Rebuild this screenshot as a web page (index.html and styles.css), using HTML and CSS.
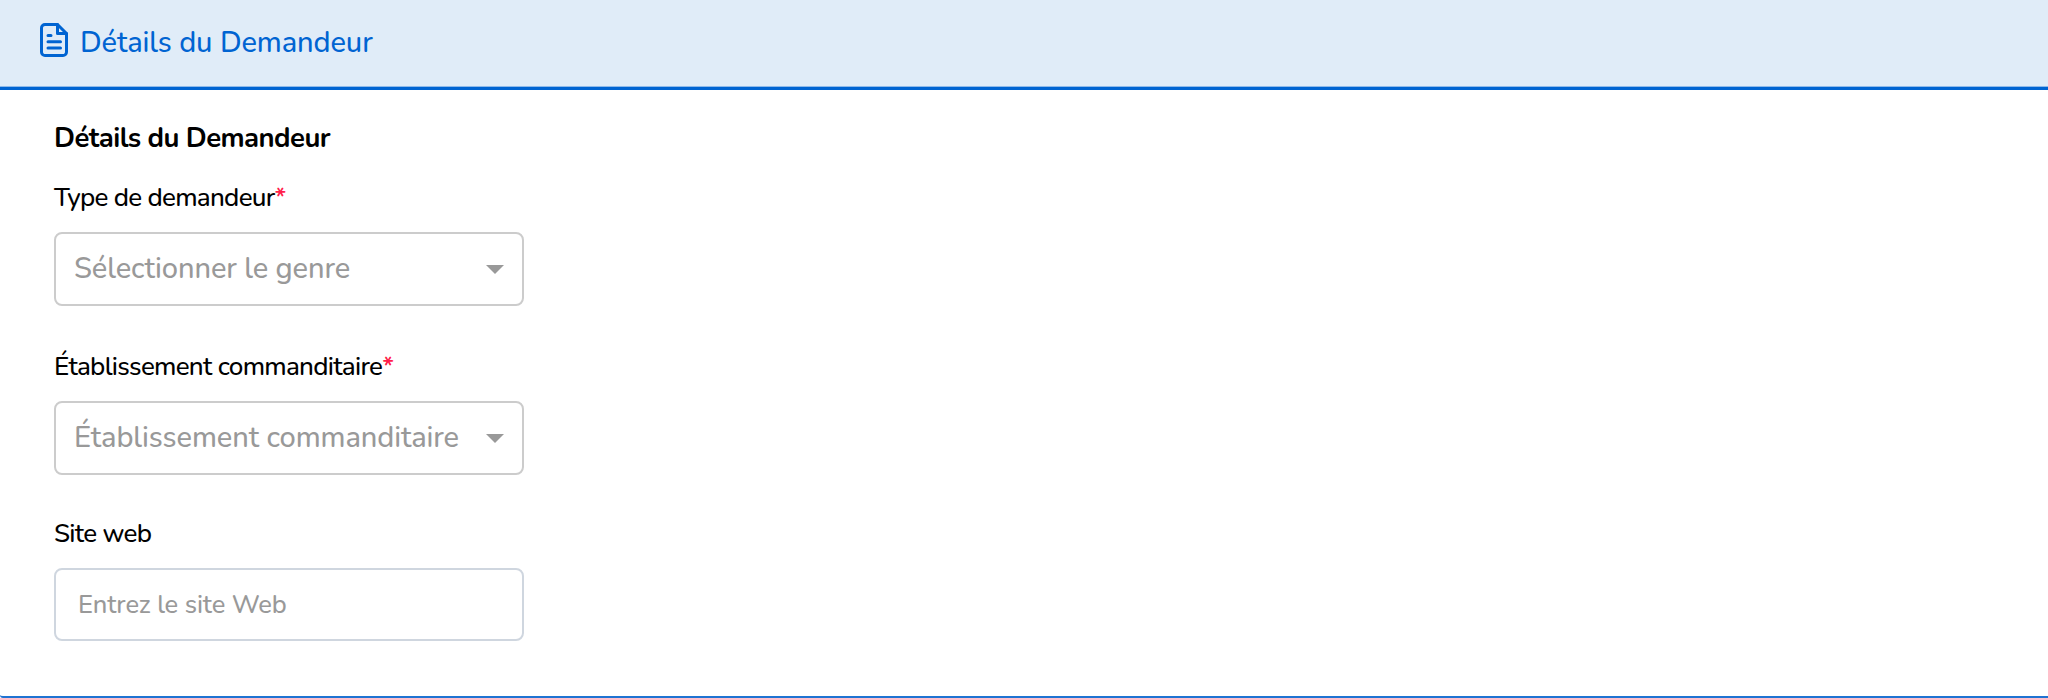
FILE: index.html
```
<!doctype html>
<html lang="fr">
  <head>
    <meta charset="UTF-8" />
    <meta name="viewport" content="width=device-width, initial-scale=1" />
    <title>Détails du Demandeur</title>
    <link rel="stylesheet" href="styles.css">
  </head>
  <body>
    <section class="panel">
      <header class="panel__header">
        <svg class="panel__icon" viewBox="0 0 28 34" fill="none" stroke="currentColor" stroke-width="3" stroke-linejoin="round" stroke-linecap="round">
          <path d="M5 1.5h12.5l9 9V29a3.500 3.500 0 0 1-3.500 3.500H5A3.500 3.500 0 0 1 1.500 29V5A3.500 3.500 0 0 1 5 1.500z" />
          <path d="M17.500 1.500v9h9" />
          <path d="M8 12.500h3M8 18.700h12.500M8 25h12.500" />
        </svg>
        <h2 class="panel__title">Détails du Demandeur</h2>
      </header>
      <form class="panel__body">
        <h3 class="form-title">Détails du Demandeur</h3>
        <div class="field">
          <label class="field__label">Type de demandeur<span class="required">*</span></label>
          <div class="select">
            <span class="select__value">Sélectionner le genre</span>
            <svg class="select__arrow" viewBox="0 0 18 9"><path d="M0 0h18L9 9z" /></svg>
          </div>
        </div>
        <div class="field">
          <label class="field__label">Établissement commanditaire<span class="required">*</span></label>
          <div class="select">
            <span class="select__value">Établissement commanditaire</span>
            <svg class="select__arrow" viewBox="0 0 18 9"><path d="M0 0h18L9 9z" /></svg>
          </div>
        </div>
        <div class="field field--text">
          <label class="field__label" for="website">Site web</label>
          <input class="input" id="website" type="text" placeholder="Entrez le site Web" />
        </div>
      </form>
    </section>
  </body>
</html>
```
FILE: styles.css
```
* {
  box-sizing: border-box;
}

body {
  margin: 0;
  background-color: #fff;
  color: #000;
  font-family: Nunito, Lato, sans-serif;
  font-weight: 500;
}

.panel {
  display: flex;
  flex-direction: column;
  height: 698px;
  border-bottom: 2px solid #1f73d2;
  border-bottom-left-radius: 3px;
}

.panel__header {
  display: flex;
  align-items: flex-start;
  gap: 12px;
  height: 90px;
  padding: 23px 40px 0;
  border-bottom: 3px solid #0064d2;
  box-shadow: inset 0 -1px #8fbaea;
  background-color: #e0ecf8;
  color: #0064d2;
}

.panel__icon {
  width: 28px;
  height: 34px;
}

.panel__title {
  margin: 0;
  font-size: 29px;
  font-weight: 500;
  line-height: 40px;
  letter-spacing: -0.1px;
}

.panel__body {
  padding: 28px 54px 0;
}

.form-title {
  margin: 0 0 18px;
  font-size: 27.5px;
  font-weight: 700;
  line-height: 40px;
  letter-spacing: -0.55px;
}

.field {
  width: 470px;
  margin-bottom: 39px;
}

.field--text {
  margin-top: -2px;
}

.field__label {
  display: block;
  height: 56px;
  font-size: 26px;
  line-height: 43px;
  letter-spacing: -0.72px;
}

.required {
  color: #ff1f4b;
  font-weight: 600;
}

.select,
.input {
  display: flex;
  align-items: center;
  justify-content: space-between;
  width: 100%;
  height: 74px;
  padding: 0 18px;
  border: 2px solid #ccc;
  border-radius: 8px;
  background-color: #fff;
}

.select__value {
  padding-bottom: 1px;
  color: #999;
  font-size: 29px;
  letter-spacing: -0.1px;
}

.select__arrow {
  width: 18px;
  height: 9px;
  fill: #999;
}

.input {
  height: 73px;
  padding: 0 22px 1px;
  border-color: #cfd6df;
  font: inherit;
  font-size: 25.5px;
  letter-spacing: -0.1px;
}

.input::placeholder {
  color: #999;
}
```
